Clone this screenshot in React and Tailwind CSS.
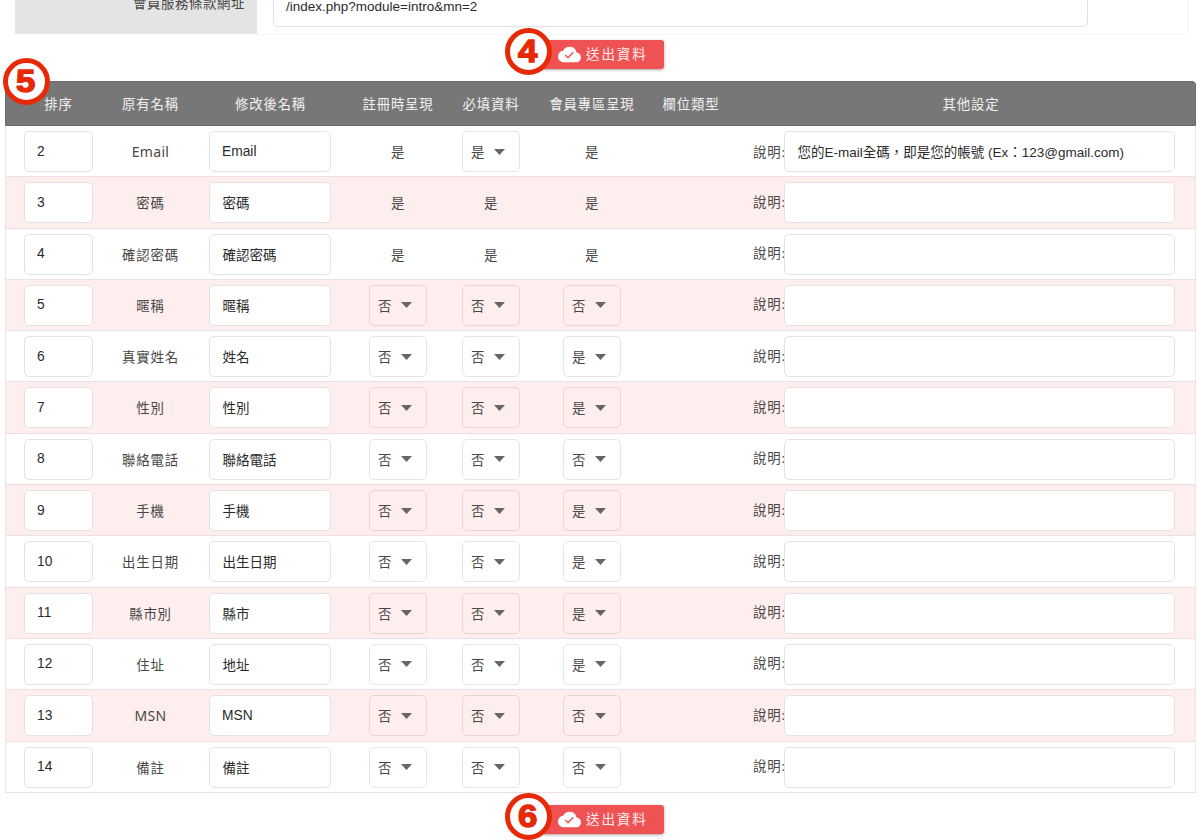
import React from 'react';

const rows = [
  [2, 'Email', 'Email', '是', '是▼', '是', '您的E-mail全碼，即是您的帳號 (Ex：123@gmail.com)'],
  [3, '密碼', '密碼', '是', '是', '是', ''],
  [4, '確認密碼', '確認密碼', '是', '是', '是', ''],
  [5, '暱稱', '暱稱', '否▼', '否▼', '否▼', ''],
  [6, '真實姓名', '姓名', '否▼', '否▼', '是▼', ''],
  [7, '性別', '性別', '否▼', '否▼', '是▼', ''],
  [8, '聯絡電話', '聯絡電話', '否▼', '否▼', '否▼', ''],
  [9, '手機', '手機', '否▼', '否▼', '是▼', ''],
  [10, '出生日期', '出生日期', '否▼', '否▼', '是▼', ''],
  [11, '縣市別', '縣市', '否▼', '否▼', '是▼', ''],
  [12, '住址', '地址', '否▼', '否▼', '是▼', ''],
  [13, 'MSN', 'MSN', '否▼', '否▼', '否▼', ''],
  [14, '備註', '備註', '否▼', '否▼', '否▼', ''],
];

const heads = ['排序', '原有名稱', '修改後名稱', '註冊時呈現', '必填資料', '會員專區呈現', '欄位類型'];

const GRID = 'grid grid-cols-[105px_79px_161px_94px_92px_110px_88px_1fr]';

const isLatin = (text) => /^[\x00-\x7f]*$/.test(String(text));

function Field({ className, children }) {
  return (
    <div
      className={`flex h-[41px] items-center rounded-[5px] border border-[#e4e2e2] bg-white font-['Liberation_Sans','Noto_Sans_CJK_TC',sans-serif] leading-5 tracking-normal whitespace-nowrap text-[#2b2b2b] ${isLatin(children) ? 'pl-3 text-[13.8px]' : 'pt-[3px] pl-[12.5px] text-[13.5px]'} ${className}`}
    >
      {children}
    </div>
  );
}

function Choice({ value }) {
  if (!value.endsWith('▼')) {
    return <div className="pt-px text-center">{value}</div>;
  }
  return (
    <div className="flex h-[41px] w-[58px] items-center rounded-[5px] border border-black/10 pl-[8px]">
      <span className="pt-px">{value[0]}</span>
      <svg className="ml-[9px] h-[6px] w-[11px]" viewBox="0 0 11 6">
        <path d="M0 0h11L5.5 6z" fill="#666" />
      </svg>
    </div>
  );
}

function Marker({ n, className }) {
  return (
    <div
      className={`absolute z-10 flex size-[47px] items-center justify-center rounded-full border-[5px] border-[#e62a08] bg-white font-['Liberation_Sans',sans-serif] text-[31px] leading-none font-bold tracking-normal text-[#e62a08] [-webkit-text-stroke:1.4px_#e62a08] ${className}`}
    >
      <span className="scale-x-112 pr-px">{n}</span>
    </div>
  );
}

function SubmitRow({ n, className }) {
  return (
    <div className={`relative flex justify-center ${className}`}>
      <Marker n={n} className="-top-[12px] left-[505px]" />
      <button className="flex h-[29px] w-[128px] items-center rounded-[3px] bg-[#ef5252] pl-[22px] text-[13.5px] tracking-[1.9px] text-white/90 shadow-[0_1px_3px_rgba(0,0,0,0.35)]">
        <svg className="mr-[5px] size-[23px]" viewBox="0 0 24 24">
          <path
            d="M19.35 10.04A7.49 7.49 0 0 0 12 4C9.11 4 6.6 5.64 5.35 8.04A5.994 5.994 0 0 0 0 14c0 3.31 2.69 6 6 6h13c2.76 0 5-2.24 5-5 0-2.64-2.05-4.78-4.65-4.96z"
            fill="#fff"
          />
          <path d="M7.6 12.6l2.8 2.8 5.6-5.8" fill="none" stroke="#ef5252" strokeWidth="1.5" />
        </svg>
        <span className="whitespace-nowrap">送出資料</span>
      </button>
    </div>
  );
}

export default function App() {
  return (
    <div className="relative h-[840px] w-[1200px] overflow-hidden bg-white font-['Open_Sans','Noto_Sans_CJK_TC',sans-serif] text-[13.4px] tracking-[0.8px] text-[#484646]">
      <div className="ml-[15px] flex h-[35px] w-[1173px]">
        <div className="h-[34px] w-[242px] bg-[#e4e4e4] pr-3 text-right">
          <div className="-mt-[7px] leading-5 tracking-[0.6px]">會員服務條款網址</div>
        </div>
        <div className="flex-1 border-r border-b border-[#f5f5f5] pl-4">
          <Field className="-mt-[14px] w-[815px]">
            <span className="text-[13.5px]">/index.php?module=intro&amp;mn=2</span>
          </Field>
        </div>
      </div>

      <SubmitRow n={4} className="mt-[5px]" />

      <div className="relative mt-3 ml-[5px] w-[1191px]">
        <Marker n={5} className="-top-[23px] -left-[2px]" />
        <div className={`${GRID} h-[45px] items-center rounded-t-[4px] border border-[#6a6a6a] bg-[#777] pt-0.5 text-center text-white/90`}>
          {heads.map((h) => (
            <div key={h} className="whitespace-nowrap">{h}</div>
          ))}
          <div className="pl-[12px]">其他設定</div>
        </div>
        <div className="border-x border-[#ebe6e6]">
          {rows.map((r, index) => (
            <div
              key={r[0]}
              className={`${GRID} h-[51.3px] items-start border-b border-[#efdfdf] pt-[5px] odd:bg-white even:bg-[#ffeeee]`}
            >
              <Field className="ml-[18px] w-[69px]">{r[0]}</Field>
              <div
                className={`flex h-[41px] items-center justify-center whitespace-nowrap ${isLatin(r[1]) ? "font-['Noto_Sans',sans-serif] text-[14px] tracking-[0.3px]" : 'pt-px'}`}
              >
                {r[1]}
              </div>
              <Field className="ml-[19px] w-[122px]">{r[2]}</Field>
              {[3, 4, 5].map((i) => (
                <div key={i} className="flex h-[41px] items-center justify-center">
                  <Choice value={r[i]} />
                </div>
              ))}
              <div />
              <div className="flex h-[41px] items-center pl-[18px]">
                <span className={`w-[31px] whitespace-nowrap ${index ? 'pb-0.5' : 'pt-px'}`}>說明:</span>
                <Field className="w-[391px]">{r[6]}</Field>
              </div>
            </div>
          ))}
        </div>
      </div>

      <SubmitRow n={6} className="mt-3" />
    </div>
  );
}
